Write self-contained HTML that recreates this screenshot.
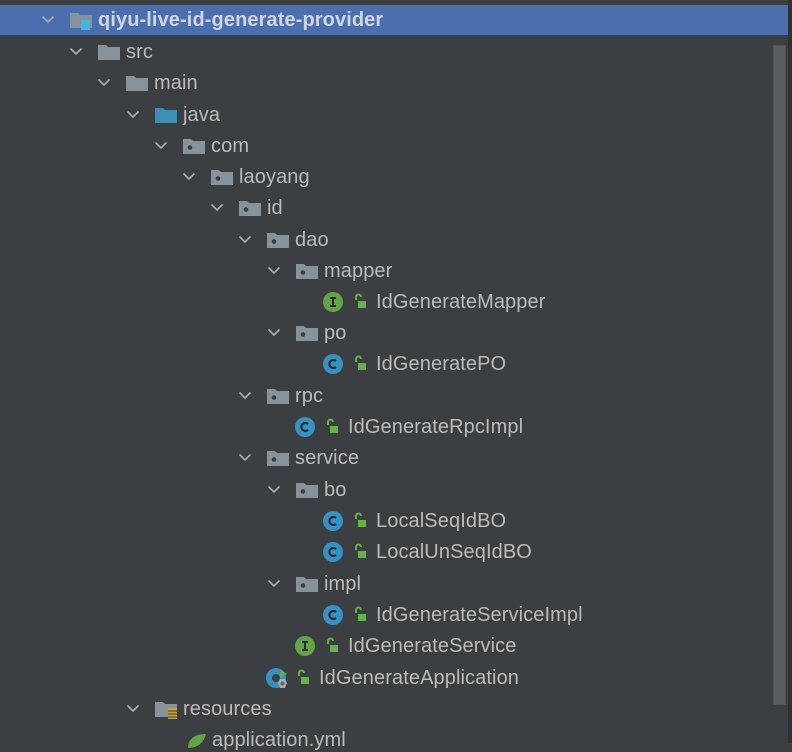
<!DOCTYPE html>
<html><head><meta charset="utf-8"><style>
html,body{margin:0;padding:0;width:792px;height:743px;overflow:hidden;background:#3c3f41;font-family:"Liberation Sans","Noto Sans CJK SC",sans-serif;}
.a{position:absolute}
.t{position:absolute;color:#bbbbbb;font-size:20px;line-height:24px;white-space:nowrap;letter-spacing:0.1px}
</style></head><body>
<div class="a" style="left:0;top:5px;width:788px;height:30px;background:#4b6eaf"></div>
<div class="a" style="left:788px;top:0;width:4px;height:743px;background:#2f3133"></div>
<div class="a" style="left:773px;top:45px;width:13px;height:660px;background:#595b5d;border:1px solid #505254;box-sizing:border-box"></div>
<div id="tree"></div>
<script>
var rows=[
[0,'proj','qiyu-live-id-generate-provider',20],
[1,'f','src',52],[2,'f','main',83],[3,'java','java',115],[4,'p','com',146],[5,'p','laoyang',177],[6,'p','id',208],[7,'p','dao',240],[8,'p','mapper',271],
[9,'I','IdGenerateMapper',302],[8,'p','po',333],[9,'C','IdGeneratePO',364],[7,'p','rpc',396],[8,'C','IdGenerateRpcImpl',427],[7,'p','service',458],[8,'p','bo',490],
[9,'C','LocalSeqIdBO',521],[9,'C','LocalUnSeqIdBO',552],[8,'p','impl',584],[9,'C','IdGenerateServiceImpl',615],[8,'I','IdGenerateService',646],[7,'A','IdGenerateApplication',678],
[3,'res','resources',709],[4,'yml','application.yml',740]];
var h='';
rows.forEach(function(r){
 var L=r[0],k=r[1],n=r[2],y=r[3];var tl=Math.round(98+28.2*L);
 if(k=='I'||k=='C'||k=='A'){
  var x=tl+24, cx=x-43;
  if(k=='A'){
   h+='<svg class="a" style="left:'+(cx-10)+'px;top:'+(y-11)+'px" width="26" height="24"><circle cx="10" cy="11" r="10" fill="#3592c4"/><circle cx="10" cy="11" r="4" fill="#3c3f41"/><path d="M14 2 L21 7 L14 11Z" fill="#59a869"/><polygon points="14,12 19,12 21,16 19,21 14,21 12,16" fill="#a4aab0"/><circle cx="16.5" cy="16.5" r="2" fill="#5f6469"/></svg>';
  }else{
   var col=k=='I'?'#62a543':'#3592c4';
   h+='<svg class="a" style="left:'+(cx-10)+'px;top:'+(y-10)+'px" width="20" height="20"><circle cx="10" cy="10" r="10" fill="'+col+'"/>'+(k=='I'?'<path d="M7 6h6M7 14h6M10 6v8" stroke="#2b2b2b" stroke-width="2"/>':'<path d="M13 7A4 4 0 1 0 13 13" stroke="#2b2b2b" stroke-width="2.2" fill="none"/>')+'</svg>';
  }
  h+='<svg class="a" style="left:'+(x-23)+'px;top:'+(y-9)+'px" width="14" height="16"><path d="M3 7V4a2.5 2.5 0 0 1 5 0" stroke="#62b543" stroke-width="2" fill="none"/><rect x="5" y="8" width="8" height="7" fill="#62b543"/></svg>';
  h+='<div class="t" style="left:'+x+'px;top:'+(y-12)+'px">'+n+'</div>';
  return;
 }
 if(k=='yml'){
  h+='<svg class="a" style="left:186px;top:'+(y-10)+'px" width="22" height="20"><path d="M2 18C2 8 10 4 20 4C18 12 12 18 2 18Z" fill="#62a543"/></svg>';
  h+='<div class="t" style="left:212px;top:'+(y-12)+'px">'+n+'</div>';return;
 }
 h+='<svg class="a" style="left:'+(tl-57)+'px;top:'+(y-5)+'px" width="14" height="9"><path d="M1.5 1.5L7 7L12.5 1.5" stroke="#a9b0b6" stroke-width="1.6" fill="none"/></svg>';
 var fc=k=='java'?'#3d8fb5':'#87939a';
 var fl=tl-28;
 h+='<svg class="a" style="left:'+fl+'px;top:'+(y-7)+'px" width="24" height="20"><path d="M0 0H8L10 2H22V15H0Z" fill="'+fc+'"/>'+
  (k=='p'?'<circle cx="7" cy="8.5" r="2.3" fill="#3c3f41"/>':'')+
  (k=='proj'?'<rect x="11" y="7" width="9" height="10" fill="#40b6e0"/>':'')+
  (k=='res'?'<rect x="13" y="6" width="9" height="11" fill="#c9a23c"/><path d="M13 9h9M13 12h9M13 15h9" stroke="#3c3f41" stroke-width="1"/>':'')+'</svg>';
 var st=k=='proj'?'font-weight:bold;color:#d0d6de;':'';
 h+='<div class="t" style="left:'+tl+'px;top:'+(y-12)+'px;'+st+'">'+n+'</div>';
});
document.getElementById('tree').innerHTML=h;
</script>
</body></html>
